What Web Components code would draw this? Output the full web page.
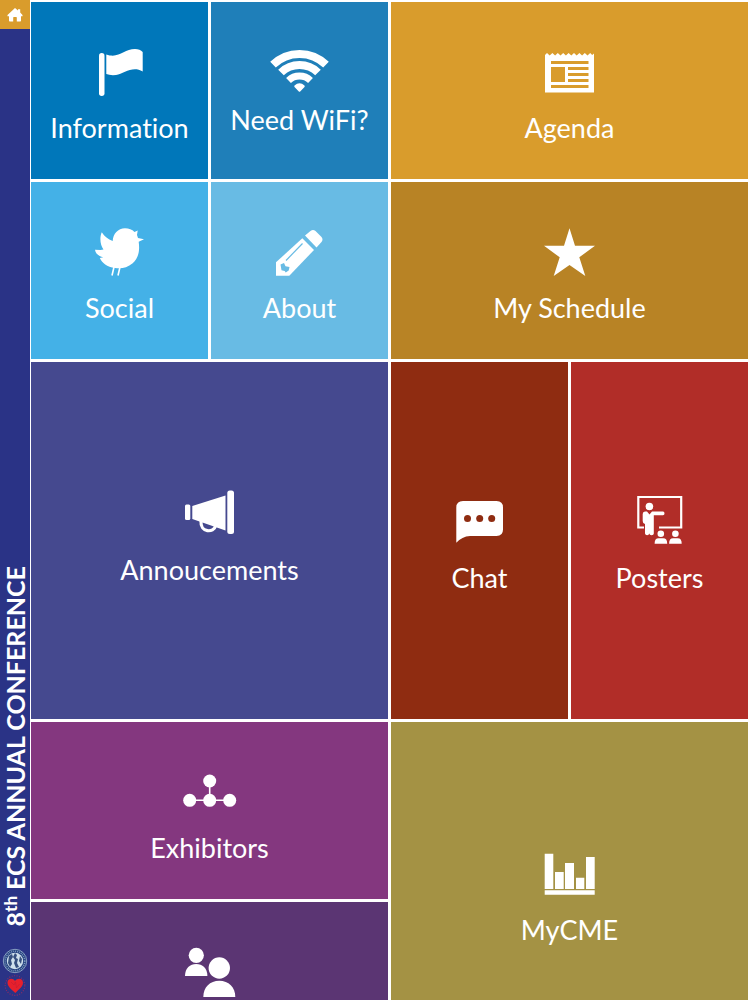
<!DOCTYPE html>
<html lang="en">
<head>
<meta charset="utf-8">
<meta name="viewport" content="width=device-width, initial-scale=1">
<title>8th ECS Annual Conference</title>
<style>
  body {
    margin: 0;
    background: #fff;
    font-family: Lato, "Liberation Sans", sans-serif;
  }
</style>
</head>
<body>
<conference-app>
  <side-bar slot="side">8<sup>th</sup> ECS ANNUAL CONFERENCE</side-bar>
  <menu-tile icon="flag" color="#0077ba">Information</menu-tile>
  <menu-tile icon="wifi" color="#1f7fb9" compact>Need WiFi?</menu-tile>
  <menu-tile icon="news" color="#d99c2c" wide>Agenda</menu-tile>
  <menu-tile icon="bird" color="#44b1e7">Social</menu-tile>
  <menu-tile icon="pencil" color="#68bbe4">About</menu-tile>
  <menu-tile icon="star" color="#b88325" wide>My Schedule</menu-tile>
  <menu-tile icon="megaphone" color="#45498f" wide tall compact>Annoucements</menu-tile>
  <menu-tile icon="chat" color="#8f2c11" tall>Chat</menu-tile>
  <menu-tile icon="board" color="#b12d28" tall>Posters</menu-tile>
  <menu-tile icon="network" color="#84377f" wide>Exhibitors</menu-tile>
  <menu-tile icon="chart" color="#a49244" wide tall compact>MyCME</menu-tile>
  <menu-tile icon="people" color="#5b3573" wide></menu-tile>
</conference-app>

<script>
(function () {
  // every icon is drawn on a 61 x 60 box, var(--tile) is the tile colour
  const icons = {
    flag: `
      <rect x="10" y="16" width="5.5" height="43" rx="2.7"/>
      <path d="M17.3 17.5C30 22 35 12 46 12q5 0 7.7 3V34.5C43 28.500 35 37 27 38q-6 .6-9.700-1z"/>`,
    wifi: `
      <g fill="none" stroke="#fff">
        <path stroke-width="8" d="M4 24.700A38 38 0 0 1 57 24.700"/>
        <path stroke-width="8" d="M12 32.500A26.500 26.500 0 0 1 49 32.500"/>
        <path stroke-width="7" d="M19.500 40.500A16 16 0 0 1 41.500 40.500"/>
      </g>
      <path d="M25.500 45.500q5-4.500 10 0 .5 1 0 1.500l-4.300 4.500q-.7.700-1.400 0L25.500 47q-.5-.5 0-1.500z"/>`,
    news: `
      <path d="M6 18l2-2 2.700 2.500L13.400 16l2.700 2.500L18.800 16l2.700 2.500L24.200 16l2.700 2.500L29.600 16l2.700 2.500L35 16l2.700 2.500L40.400 16l2.700 2.500L45.800 16l2.700 2.500L51.200 16l2 2L55 16.500V55.500H6z"/>
      <path fill="var(--tile)" d="M12 24h37.500v3H12zM12 30h14v15H12zM29 30h20.500v3H29zM29 36h20.500v3H29zM29 42h20.500v3H29zM12 48h37.500v3H12z"/>`,
    bird: `
      <path d="M23.700 24C24 17 29 11.300 36 11.300c4 0 7 1.200 9.500 3.700l3.200-1.600-.7 4.600 1 3 6 1.300-5.300 2.500c1.300 10-.4 16-6 21.500C38 51 32 52 26 51 18 50 13 46 10.800 41l3.400-.7C9.500 39 6.500 36.500 6 32.700l5.500.3 3-.6C11 28 10.500 20 12.800 15.300 15.500 19.500 19 22.500 23.700 24z"/>
      <path fill="none" stroke="#fff" stroke-width="1.600" d="M25 50l-2 8.500M31 50l-2 8.500"/>`,
    pencil: `
      <path d="M36 18.500l5.500-4.500q2.500-2 5 0l6 6q2 2.500 0 5L47.500 30.500z"/>
      <path d="M33.300 21.300L45 33 20.300 58.700H7V45.300z"/>
      <path fill="none" stroke="var(--tile)" stroke-width="1.200" d="M33.500 26.500L17 43.500"/>
      <path fill="var(--tile)" d="M11.500 47.500l3.500-1.500 1.500 3.300L20.500 50l-.8 3.500-3 2-1-1.500-3.200-.8z"/>`,
    star: `<path d="M30.500 11.300L36 28.700H56L40.300 40.300 46.300 59 30.500 48 14.700 59 20.700 40.300 5 28.700H25z"/>`,
    megaphone: `
      <rect x="6" y="14.500" width="5.300" height="15.500" rx="1.500"/>
      <path d="M13.300 16L46.500 5.500V40.500L13.300 29z"/>
      <rect x="48.300" y=".5" width="6.700" height="43.500" rx="2.500"/>
      <path fill="none" stroke="#fff" stroke-width="3.200" d="M22 31c-1 12 13 12 14.500 5"/>`,
    chat: `
      <path d="M14 14H47.500q6.500 0 6.500 6.500V42.500q0 6.500-6.500 6.500H21q-8 .5-13.700 6.700V20.500Q7.300 14 14 14z"/>
      <g fill="var(--tile)"><circle cx="18.500" cy="31.600" r="3.500"/><circle cx="30.700" cy="31.600" r="3.500"/><circle cx="42.700" cy="31.600" r="3.500"/></g>`,
    board: `
      <path fill="none" stroke="#fff" stroke-width="2.200" d="M15 40.500H9.300V10H52.200V40.500H30"/>
      <circle cx="20.400" cy="19.500" r="3.800"/>
      <path d="M16 24.500h2l2.500 3 2.500-3H34q1.500.3 1.500 1.900T34 28.300H24.800V46.500q0 1.700-2.200 1.700T20.300 46.500q-.4 1.700-2.200 1.700T16 46.500V37q-2.300-.5-2.300-3V27q0-2.300 2.300-2.500z"/>
      <circle cx="31.800" cy="46.700" r="3.300"/>
      <circle cx="46.400" cy="46.700" r="3.300"/>
      <path d="M25.600 56.700q0-5.400 4-5.400h4.600q4 0 4 5.400zM40.100 56.700q0-5.400 4-5.400h4.600q4 0 4 5.400z"/>`,
    network: `
      <path fill="none" stroke="#fff" stroke-width="1.600" d="M30.700 24V43.300M10.700 43.300H50.700"/>
      <circle cx="30.700" cy="24" r="6.500"/><circle cx="10.700" cy="43.300" r="6.500"/>
      <circle cx="30.700" cy="43.300" r="6.500"/><circle cx="50.700" cy="43.300" r="6.500"/>`,
    people: `
      <circle cx="17.300" cy="18.300" r="7.600"/>
      <path d="M6 39C6 31 11 27 17.200 27S28.400 31 28.400 39z"/>
      <circle cx="40.300" cy="31" r="10.700"/>
      <path d="M24.300 60C24.300 50 31 43.700 40.300 43.700S56.300 50 56.300 60z"/>`,
    chart: `<path d="M5.700 3.700h8.600V39H5.700zM16 22h8.700V39H16zM26 13h9V39h-9zM37 27.700h8.300V39H37zM47 7h8.700V39H47zM5.700 40.300h50v4.400h-50z"/>`
  };

  const appTemplate = document.createElement('template');
  appTemplate.innerHTML = `
    <style>
      :host {
        display: flex;
        height: 100vh;
        gap: 1px;
      }

      main {
        flex: 1;
        min-width: 0;
        overflow-y: auto;
        scrollbar-width: none;
        display: grid;
        grid-template-columns: repeat(4, 1fr);
        grid-auto-rows: minmax(177px, auto);
        grid-auto-flow: dense;
        gap: 3px;
        padding: 2px 2px 2px 0;
        box-sizing: border-box;
      }
    </style>
    <slot name="side"></slot>
    <main><slot></slot></main>
  `;

  class ConferenceApp extends HTMLElement {
    constructor() {
      super();
      this.attachShadow({ mode: 'open' }).appendChild(appTemplate.content.cloneNode(true));
    }
  }

  const sideTemplate = document.createElement('template');
  sideTemplate.innerHTML = `
    <style>
      :host {
        display: flex;
        flex-direction: column;
        align-items: center;
        width: 30px;
        background: #2a3386;
        color: #fff;
      }

      a {
        display: flex;
        align-items: center;
        justify-content: center;
        width: 100%;
        height: 29px;
        background: #d99c2c;
      }

      svg {
        display: block;
      }

      h1 {
        margin: auto 0 22px;
        writing-mode: vertical-rl;
        transform: rotate(180deg);
        font-size: 25px;
        line-height: 30px;
        font-weight: 700;
        white-space: nowrap;
      }

      ::slotted(sup) {
        font-size: 17px;
        line-height: 0;
        vertical-align: 4px;
      }

      .logos {
        display: flex;
        flex-direction: column;
        gap: 1px;
        padding-bottom: 3px;
      }
    </style>
    <a href="#home" aria-label="Home">
      <svg width="16" height="16" viewBox="0 0 16 16" fill="#fff">
        <path d="M8 1l3 2.600V2.300h2.200v3.200L15.500 8v1.300H14v4.400q0 .8-.8.8H9.800V10.500q0-.6-.6-.6H6.800q-.6 0-.6.600v4H2.800q-.8 0-.8-.8V9.300H.5V8z"/>
      </svg>
    </a>
    <h1></h1>
    <div class="logos">
      <svg width="26" height="26" viewBox="0 0 26 26">
        <circle cx="13" cy="13" r="11.700" fill="#25427f" stroke="#9fb8d2" stroke-width=".8"/>
        <circle cx="13" cy="13" r="9.800" fill="none" stroke="#7f9cc0" stroke-width="1.500" stroke-dasharray="1 1"/>
        <circle cx="13" cy="13" r="8.200" fill="#cfe0ec"/>
        <path fill="#36507f" d="M7 8l3-2 1 3-2 3 1 4-2 3-2-4zM13 5l2 2-1 3 2 1-1 4 2 4-3 1-2-5 1-3-2-3zM18 8l2 3-1 5-2-3z"/>
      </svg>
      <svg width="26" height="22" viewBox="0 0 26 22">
        <circle cx="13" cy="10.500" r="9.800" fill="none" stroke="#8b2b66" stroke-width="1.200" stroke-dasharray="1 1.500"/>
        <path fill="#e7202c" d="M13.300 18C9 14 5.500 11.500 5.500 7.500c0-4 5.300-5 7.500-1.500 2.500-3.500 8-2.500 8 1.700 0 3.800-4 6.500-7.700 10.300z"/>
        <path fill="none" stroke="#c41c34" stroke-width=".6" d="M9 7l3 3 1.500-3 1 6 3-4"/>
      </svg>
    </div>
  `;

  class SideBar extends HTMLElement {
    constructor() {
      super();
      this._shadowRoot = this.attachShadow({ mode: 'open' });
      this._shadowRoot.appendChild(sideTemplate.content.cloneNode(true));
      this._shadowRoot.querySelector('h1').appendChild(document.createElement('slot'));
    }
  }

  const tileTemplate = document.createElement('template');
  tileTemplate.innerHTML = `
    <style>
      :host {
        display: block;
        --icon-gap: 14px;
        --drop: 0px;
      }

      :host([wide]) {
        grid-column: span 2;
      }

      :host([tall]) {
        grid-row: span 2;
      }

      :host([compact]) {
        --icon-gap: 3px;
        --drop: 5px;
      }

      a {
        display: flex;
        flex-direction: column;
        align-items: center;
        justify-content: center;
        gap: var(--icon-gap);
        height: 100%;
        box-sizing: border-box;
        padding-bottom: var(--drop);
        background: var(--tile);
        color: #fff;
        text-decoration: none;
        text-align: center;
      }

      svg {
        display: block;
        fill: #fff;
      }

      span {
        min-height: 33px;
        font-size: 27px;
        line-height: 33px;
        font-variant-ligatures: none;
      }
    </style>
    <a href="#">
      <svg width="61" height="60" viewBox="0 0 61 60" aria-hidden="true"></svg>
      <span><slot></slot></span>
    </a>
  `;

  class MenuTile extends HTMLElement {
    constructor() {
      super();
      this._shadowRoot = this.attachShadow({ mode: 'open' });
      this._shadowRoot.appendChild(tileTemplate.content.cloneNode(true));
      this.$link = this._shadowRoot.querySelector('a');
      this.$icon = this._shadowRoot.querySelector('svg');
    }

    static get observedAttributes() {
      return ['icon', 'color'];
    }

    attributeChangedCallback() {
      this.render();
    }

    render() {
      const icon = this.getAttribute('icon');
      this.$link.href = '#' + icon;
      this.$link.style.setProperty('--tile', this.getAttribute('color'));
      this.$icon.innerHTML = icons[icon] || '';
    }
  }

  window.customElements.define('conference-app', ConferenceApp);
  window.customElements.define('side-bar', SideBar);
  window.customElements.define('menu-tile', MenuTile);
})()
</script>
</body>
</html>
